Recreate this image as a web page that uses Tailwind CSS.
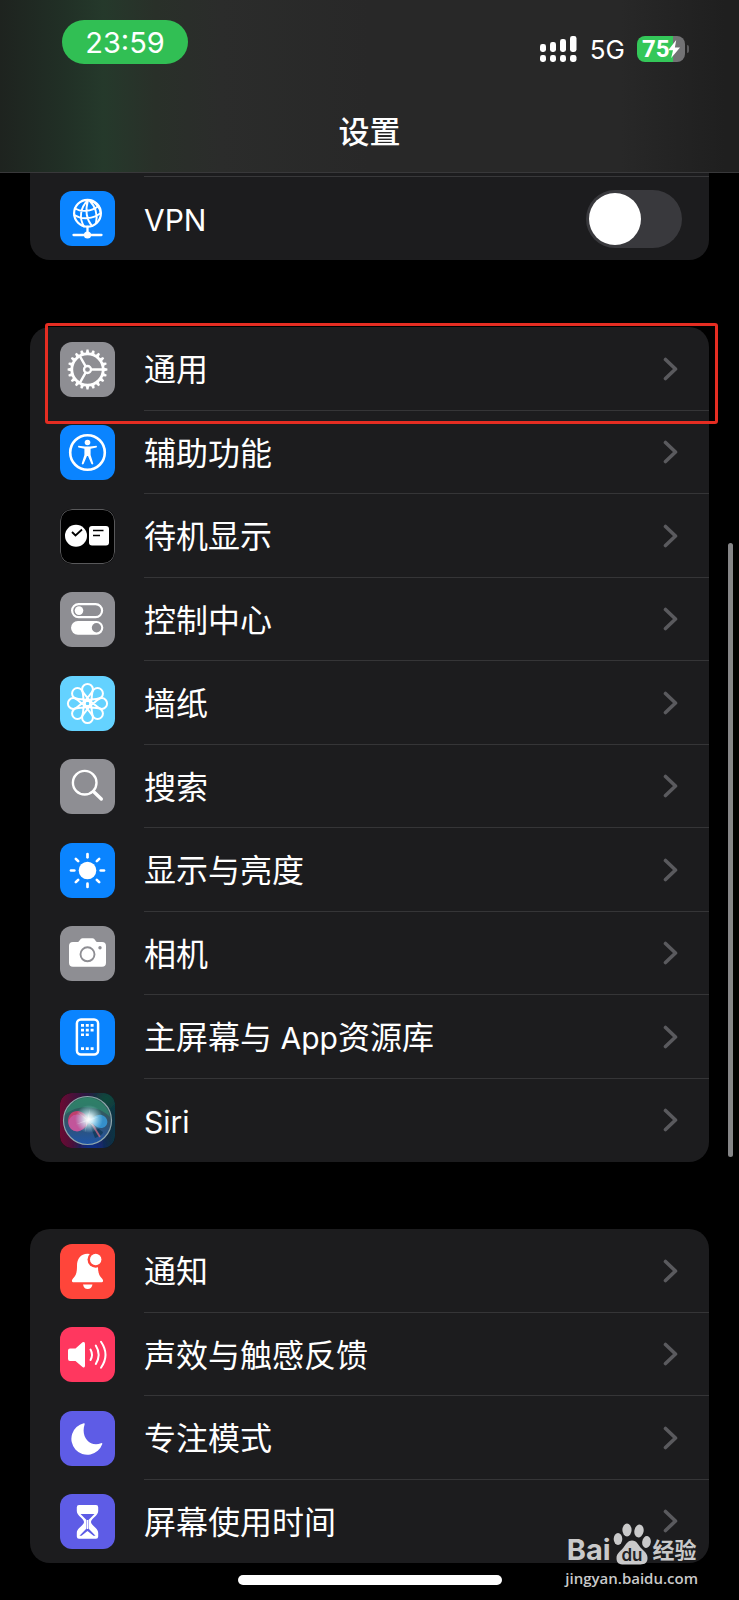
<!DOCTYPE html>
<html lang="zh-CN">
<head>
<meta charset="utf-8">
<meta name="viewport" content="width=device-width, initial-scale=1">
<title>设置</title>
<script src="https://cdn.jsdelivr.net/npm/@tailwindcss/browser@4"></script>
</head>
<body class="bg-black text-white font-[Inter,'Noto_Sans_CJK_SC',sans-serif]">
<div class="relative min-h-screen overflow-hidden">

  <header class="flex h-[173px] flex-col border-b border-[#38383a] bg-[linear-gradient(90deg,#1e231f_0%,#213026_9%,#25392b_14%,#293029_21%,#2b2c2b_30%,#282828_50%,#282828_84%,#1f1f1f_98%)]">
    <div class="flex items-start justify-between pt-5 pr-[50px] pl-[62px]">
      <div class="flex h-11 w-[126px] items-center justify-center rounded-full bg-[#31bf54] pt-0.5 text-[29px]">23:59</div>
      <div class="mt-4 flex h-[26px] items-center">
        <svg class="mr-[13px] h-[26px] w-[37px]" viewBox="0 0 37 26" fill="#fff" aria-label="信号">
          <rect x="0" y="8" width="6" height="8" rx="2.4"/><rect x="10" y="6" width="6" height="10" rx="2.4"/><rect x="20" y="3" width="6" height="13" rx="2.4"/><rect x="30" y="0" width="6.5" height="16" rx="2.4"/>
          <rect x="0" y="19" width="6" height="7" rx="2.4"/><rect x="10" y="19" width="6" height="7" rx="2.4"/><rect x="20" y="19" width="6" height="7" rx="2.4"/><rect x="30" y="19" width="6.5" height="7" rx="2.4"/>
        </svg>
        <span class="mr-3 pt-0.5 text-[26px] leading-[26px]">5G</span>
        <div class="relative flex h-[26px] w-12 items-center rounded-lg bg-[linear-gradient(90deg,#34c759_75%,#727274_75%)] pl-[5px]">
          <span class="font-[Roboto] text-[24px] leading-[26px] font-bold">75</span>
          <svg class="absolute top-[3px] left-[30px] h-5 w-[14px]" viewBox="0 0 14 20"><path d="M9.2 1 1.2 11.2H6L4.2 19 13 8.4H7.9Z" fill="#fff"/></svg>
        </div>
        <span class="ml-0.5 h-2 w-0.5 rounded-r-full bg-[#5a5a5c]"></span>
      </div>
    </div>
    <h1 class="mt-11 text-center text-[31px] leading-[48px] font-medium">设置</h1>
  </header>

  <main class="flex flex-col gap-[67px] px-[30px]">
    <section class="rounded-b-[20px] bg-[#1c1c1e]">
      <div class="ml-[114px] h-1 border-b border-[#38383a]"></div>
      <label class="flex h-[83px] items-center pr-[27px] pl-[30px]">
        <svg class="size-[55px] shrink-0 rounded-xl bg-[#0a84ff]" viewBox="0 0 55 55" fill="none" stroke="#fff" stroke-width="1.9" stroke-linecap="round">
          <circle cx="27.5" cy="22.3" r="13.4" stroke-width="2.2"/>
          <path d="M28 9C20 17 19 27 24 35.500M28 9C25.500 18 26 28 32 35M29 9C35 15 38 23 36 32M31 9.500C37 13 40 18 40.700 22M15 17.500C21 21 31 21 38.500 15M14.300 24C22 29 33 28 40.700 22"/>
          <path d="M27.500 36V43M13.500 44H41.500" stroke-width="2.300"/><circle cx="27.500" cy="44" r="3.600" fill="#fff" stroke="none"/>
        </svg>
        <span class="ml-[29px] flex-1 pt-[3px] text-[30px]">VPN</span>
        <input type="checkbox" role="switch" class="h-[58px] w-24 appearance-none rounded-full bg-[#39393d] p-[3px] before:block before:size-[52px] before:rounded-full before:bg-white before:content-[''] checked:bg-[#34c759]">
      </label>
    </section>

    <nav class="relative" aria-label="通用设置">
      <ul id="list-main" class="rounded-[20px] bg-[#1c1c1e]"></ul>
      <div class="pointer-events-none absolute -top-1 -right-[9px] left-[15px] h-[101px] rounded-[3px] border-[3px] border-[#e52d22]"></div>
    </nav>

    <nav aria-label="通知与专注">
      <ul id="list-alerts" class="rounded-[20px] bg-[#1c1c1e]"></ul>
    </nav>
  </main>

  <footer class="relative flex h-[37px] justify-center pt-3">
    <div class="h-[10px] w-[264px] rounded-full bg-white"></div>
    <div class="absolute right-[41px] bottom-[13px] flex flex-col items-center text-[#c9c9ca]">
      <div class="flex items-end">
        <span class="text-[29px] leading-[30px] font-bold">Bai</span>
        <svg class="ml-0.5 h-[42px] w-[38px]" viewBox="0 0 38 42" fill="#c9c9ca">
          <ellipse cx="5" cy="16" rx="4.300" ry="6"/><ellipse cx="14" cy="7" rx="4.600" ry="6.500"/><ellipse cx="26" cy="8" rx="4.600" ry="6.500" transform="rotate(12 26 8)"/><ellipse cx="33.500" cy="19" rx="4.300" ry="6" transform="rotate(8 33.500 19)"/>
          <path d="M19 17.500C24 17.500 25 22 28.500 25.500C32 29 35 31 34.500 36C34 41 30 41.500 26 41.500H11C6 41.500 3.500 40 3.500 35C3.500 30 8 28 10.500 24.500C13 21 15 17.500 19 17.500Z"/>
          <text x="19" y="38" text-anchor="middle" font-family="Inter" font-size="17" font-weight="600" fill="#222224">du</text>
        </svg>
        <span class="ml-0.5 text-[22px] leading-[30px] font-bold">经验</span>
      </div>
      <span class="mt-1 font-['Open_Sans'] text-[15px] leading-[18px] font-semibold">jingyan.baidu.com</span>
    </div>
  </footer>

  <div class="absolute top-[543px] right-[6px] h-[614px] w-[5px] rounded-full bg-[#858587]"></div>
</div>

<template id="row">
  <li class="group odd:h-[84px] even:h-[83px]">
    <a href="#" class="flex h-full items-center pl-[30px]">
      <span class="icon flex size-[55px] shrink-0 overflow-hidden rounded-xl"></span>
      <span class="ml-[29px] flex h-full flex-1 items-center justify-between border-b border-[#353537] pr-[31px] group-last:border-transparent">
        <span class="label pt-[3px] text-[32px] leading-[48px]"></span>
        <svg class="h-6 w-[15px]" viewBox="0 0 15 24" fill="none" stroke="#5a5a5e" stroke-width="3.600" stroke-linecap="round" stroke-linejoin="round"><path d="M2.500 2.500 12.500 12 2.500 21.500"/></svg>
      </span>
    </a>
  </li>
</template>

<script>
const spin = (n, shape, offset = 0) => Array.from({length: n}, (_, i) =>
  `<g transform="rotate(${offset + i * 360 / n} 27.5 27.5)">${shape}</g>`).join('');
const line = (w, body) => `<g fill="none" stroke="#fff" stroke-width="${w}" stroke-linecap="round" stroke-linejoin="round">${body}</g>`;

const icons = {
  gear: line(2.8, '<circle cx="27.5" cy="27.5" r="15.7"/><circle cx="27.5" cy="27.5" r="3.5" stroke-width="2.300"/>' + spin(3, '<path d="M31.500 27.500H42" stroke-width="2.400"/>'))
    + spin(20, '<path d="M43 25.500 47.400 26.500V28.500L43 29.500Z" fill="#fff"/>'),
  access: line(2.6, '<circle cx="27.5" cy="27.5" r="17.3"/>')
    + '<circle cx="27.500" cy="17.500" r="2.800" fill="#fff"/><path d="M18.500 20.700 25 21.600H30L36.500 20.700Q37.600 21.800 36.500 22.400L30.600 23.700V30L33.300 38.500Q32.500 40.200 31.300 38.800L28 31H27L23.700 38.800Q22.500 40.200 21.700 38.500L24.400 30V23.700L18.500 22.400Q17.400 21.800 18.500 20.700Z" fill="#fff"/>',
  standby: '<rect x=".5" y=".5" width="54" height="54" rx="11.500" fill="#000" stroke="#58585a"/><circle cx="16" cy="26.700" r="11" fill="#fff"/><path d="M12 23 15.500 26.500 22 20.500" fill="none" stroke="#000" stroke-width="1.800"/><rect x="29" y="17" width="20" height="19.500" rx="3" fill="#fff"/><path d="M33 21.500H43.500M33 26.500H40" stroke="#000" stroke-width="1.500"/>',
  control: line(2.2, '<rect x="12.100" y="12.100" width="30" height="13" rx="6.500"/>')
    + '<circle cx="19" cy="18.600" r="4.300" fill="#fff"/><rect x="11" y="29" width="32.300" height="13.700" rx="6.850" fill="#fff"/><circle cx="36.500" cy="35.800" r="4.700" fill="#8e8e93"/>',
  flower: line(2, spin(8, '<path d="M30.200 27.500C30 22 22.100 18 22.100 13.300A5.400 5.400 0 0 1 32.900 13.300C32.900 18 25 22 24.800 27.500"/>')) + '<circle cx="27.500" cy="27.500" r="1.600" fill="#64d2ff"/>',
  search: line(2.4, '<circle cx="24.700" cy="23.700" r="11.800"/><path d="M33.500 32.500 41.300 40" stroke-width="3.400"/>'),
  sun: '<circle cx="27.500" cy="27.500" r="8.800" fill="#fff"/>' + line(2.7, spin(8, '<path d="M27.500 11V14.300"/>')),
  camera: '<path d="M13 16H18C19.500 16 20 12.300 22.500 12.300H32.500C35 12.300 35.500 16 37 16H42Q46 16 46 20V36.700Q46 40.700 42 40.700H13Q9 40.700 9 36.700V20Q9 16 13 16Z" fill="#fff"/><circle cx="27.500" cy="28.300" r="7" fill="none" stroke="#8e8e93" stroke-width="1.900"/><circle cx="40" cy="21.800" r="1.700" fill="#8e8e93"/>',
  phone: line(2.5, '<rect x="16.900" y="9.500" width="21.200" height="35" rx="4"/>')
    + '<path d="M21 14h3v2.700h-3zM25.800 14h3v2.700h-3zM30.600 14h3v2.700h-3zM21 18.700h3v2.700h-3zM25.800 18.700h3v2.700h-3zM30.600 18.700h3v2.700h-3zM21 23.400h3v2.700h-3zM25.800 23.400h3v2.700h-3zM21 37.300h3v2.700h-3zM25.800 37.300h3v2.700h-3zM30.600 37.300h3v2.700h-3z" fill="#fff"/>',
  siri: `<defs>
      <radialGradient id="glow"><stop offset="0" stop-color="#fff"/><stop offset=".3" stop-color="#e6fbff" stop-opacity=".85"/><stop offset="1" stop-color="#aef" stop-opacity="0"/></radialGradient>
      <linearGradient id="base"><stop offset="0" stop-color="#6b0a32"/><stop offset=".45" stop-color="#2c1640"/><stop offset="1" stop-color="#0b3444"/></linearGradient>
      <linearGradient id="orb" x2="0" y2="1"><stop offset="0" stop-color="#2b6a58"/><stop offset=".5" stop-color="#345266"/><stop offset="1" stop-color="#1e55a8"/></linearGradient>
      <filter id="soft" x="-50%" y="-50%" width="200%" height="200%"><feGaussianBlur stdDeviation="5"/></filter></defs>
    <rect width="55" height="55" fill="url(#base)"/>
    <g filter="url(#soft)"><circle cx="46" cy="6" r="10" fill="#0b4a3a"/><circle cx="32" cy="54" r="12" fill="#0e2b80"/></g>
    <circle cx="27.500" cy="27.500" r="24" fill="url(#orb)" stroke="#8fa6ab" stroke-width="1.200"/>
    <path d="M5 22A23 23 0 0 1 50 24C40 13 18 10 5 22Z" fill="#2f9373" opacity=".55"/>
    <path d="M28 25C20 13 8 18 8 28S20 45 30 28Z" fill="#e2386f" opacity=".8"/><circle cx="17" cy="30" r="8.500" fill="#c565b8" opacity=".6"/>
    <path d="M28 26C34 25 38 20 43 22.500C50 26 48 35 41 35C36 35 33 30 28 28Z" fill="#37a4ea" opacity=".75"/>
    <path d="M29 29 35 45Q43 42 43 39Z" fill="#0d3450" opacity=".7"/><path d="M32 31 40 44" stroke="#dc6b88" stroke-width="1.800" opacity=".7"/>
    <circle cx="29" cy="26" r="14" fill="url(#glow)"/>${spin(6, '<path d="M27 27.500 27.800 15 28.600 27.500Z" fill="#fff" opacity=".35"/>', 10)}`,
  bell: '<path d="M27.500 9.700C20.500 9.700 17 15 17 21.500C17 29 16 31.500 13 34.500C11 36.800 12 38.300 14 38.300H41C43 38.300 44 36.800 42 34.500C39 31.500 38 29 38 21.500C38 15 34.500 9.700 27.500 9.700Z" fill="#fff"/><path d="M23 40.500H32.500Q31.500 45 27.700 45T23 40.500Z" fill="#fff"/><circle cx="35.700" cy="15.500" r="8.200" fill="#ff453a"/><circle cx="35.700" cy="15.500" r="5.700" fill="#fff"/>',
  sound: '<path d="M10 21.500H15.500L22.500 15.300Q25 14 25 17V38.500Q25 41.500 22.500 40L15.500 34H10Q8 34 8 32V23.500Q8 21.500 10 21.500Z" fill="#fff"/>'
    + line(2, '<path d="M30.500 22.500Q33.500 27.800 30.500 33M35.800 18.500Q41.500 27.800 35.800 37M41 14.800Q50 27.800 41 40.700"/>'),
  moon: '<path d="M23.800 12.300A15.900 15.900 0 1 0 42.300 33Q42.500 31.500 41 32.200C30 36.500 20.500 26 24.600 13.500Q25 12 23.800 12.300Z" fill="#fff"/>',
  hourglass: '<path d="M19 11H36Q38.200 11 38.200 13.300V17C38.200 22 31 24.500 31 27.900S38.200 34 38.200 39V42.500Q38.200 44.800 36 44.800H19Q16.800 44.800 16.800 42.500V39C16.800 34 24 31.300 24 27.900S16.800 22 16.800 17V13.300Q16.800 11 19 11Z" fill="#fff"/><path d="M20.500 20H34.500L28.500 26V34.500L35.500 41.800H33.500L27.500 37 21.500 41.800H19.500L26.500 34.500V26Z" fill="#5e5ce6"/><path d="M27 26H28V35H27Z" fill="#fff"/>'
};

const lists = {
  'list-main': [
    ['gear', 'bg-[#8e8e93]', '通用'],
    ['access', 'bg-[#0a84ff]', '辅助功能'],
    ['standby', 'bg-black', '待机显示'],
    ['control', 'bg-[#8e8e93]', '控制中心'],
    ['flower', 'bg-[#64d2ff]', '墙纸'],
    ['search', 'bg-[#8e8e93]', '搜索'],
    ['sun', 'bg-[#0a84ff]', '显示与亮度'],
    ['camera', 'bg-[#8e8e93]', '相机'],
    ['phone', 'bg-[#0a84ff]', '主屏幕与<span class="text-[30px]"> App</span>资源库'],
    ['siri', 'bg-black', '<span class="text-[30px]">Siri</span>']
  ],
  'list-alerts': [
    ['bell', 'bg-[#ff453a]', '通知'],
    ['sound', 'bg-[#ff375f]', '声效与触感反馈'],
    ['moon', 'bg-[#5e5ce6]', '专注模式'],
    ['hourglass', 'bg-[#5e5ce6]', '屏幕使用时间']
  ]
};

for (const [id, rows] of Object.entries(lists)) {
  for (const [icon, color, label] of rows) {
    const row = document.getElementById('row').content.cloneNode(true);
    const tile = row.querySelector('.icon');
    tile.classList.add(color);
    tile.innerHTML = `<svg viewBox="0 0 55 55" width="55" height="55" aria-hidden="true">${icons[icon]}</svg>`;
    row.querySelector('.label').innerHTML = label;
    document.getElementById(id).append(row);
  }
}
</script>
</body>
</html>
